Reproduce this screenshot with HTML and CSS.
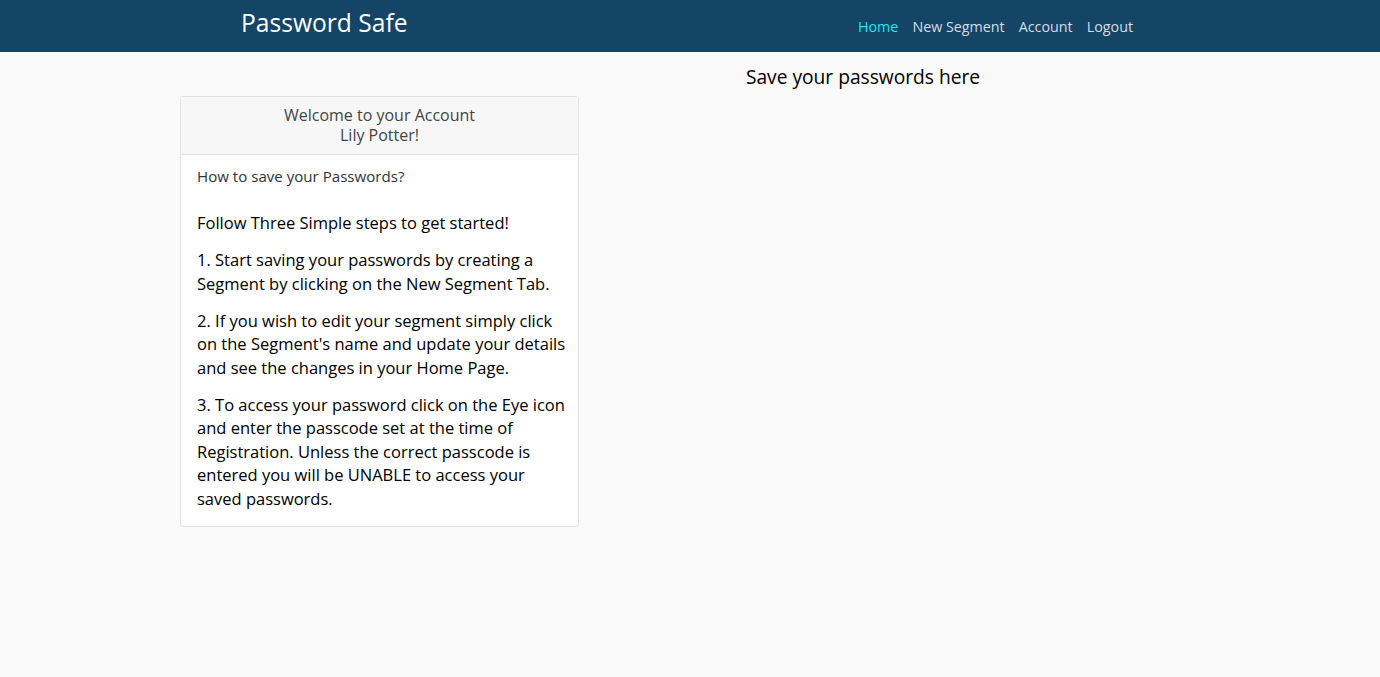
FILE: index.html
```html
<!DOCTYPE html>
<html lang="en">
<head>
<meta charset="utf-8">
<title>Password Safe</title>
<link rel="stylesheet" href="styles.css">
</head>
<body>
<header class="navbar">
  <div class="nav-inner">
    <a class="brand" href="#">Password Safe</a>
    <nav class="links">
      <a class="link active" href="#">Home</a>
      <a class="link" href="#">New Segment</a>
      <a class="link" href="#">Account</a>
      <a class="link" href="#">Logout</a>
    </nav>
  </div>
</header>
<main class="main">
  <section class="card">
    <div class="card-header">Welcome to your Account<br>Lily Potter!</div>
    <div class="card-body">
      <p class="howto">How to save your Passwords?</p>
      <p class="step">Follow Three Simple steps to get started!</p>
      <p class="step">1. Start saving your passwords by creating a<br>Segment by clicking on the New Segment Tab.</p>
      <p class="step">2. If you wish to edit your segment simply click<br>on the Segment's name and update your details<br>and see the changes in your Home Page.</p>
      <p class="step">3. To access your password click on the Eye icon<br>and enter the passcode set at the time of<br>Registration. Unless the correct passcode is<br>entered you will be UNABLE to access your<br>saved passwords.</p>
    </div>
  </section>
  <section class="saved">
    <h2 class="saved-title">Save your passwords here</h2>
  </section>
</main>
</body>
</html>
```
FILE: styles.css
```css
* { box-sizing: border-box; }
html, body { margin: 0; padding: 0; }
body {
  background: #f9f9f9;
  font-family: "Open Sans", "Noto Sans", sans-serif;
  color: #000;
}
.navbar {
  background: #144466;
  height: 52px;
}
.nav-inner {
  width: 898px;
  margin: 0 auto;
  height: 52px;
  display: flex;
  align-items: center;
  justify-content: space-between;
}
.brand {
  color: #fff;
  text-decoration: none;
  font-size: 24.6px;
  line-height: 30px;
  margin-top: -6px;
}
.links { display: flex; align-items: center; margin-top: 2px; margin-right: -1px; }
.link {
  color: #d6dde4;
  text-decoration: none;
  font-size: 14.3px;
  line-height: 22px;
  padding: 0 7px;
}
.link.active { color: #1ee6f3; }
.main {
  display: flex;
  align-items: flex-start;
  padding-left: 180px;
}
.card {
  width: 399px;
  margin-top: 44px;
  background: #fff;
  border: 1px solid #e2e2e2;
  border-radius: 3px;
}
.card-header {
  background: #f7f7f7;
  border-bottom: 1px solid #e2e2e2;
  text-align: center;
  color: #444;
  font-size: 16px;
  line-height: 20px;
  padding: 8px 16px 9px;
}
.card-body { padding: 11px 16px 16px; }
.howto {
  margin: 0 0 25px;
  font-size: 15.1px;
  line-height: 20px;
  color: #333;
}
.step {
  margin: 0 0 13.5px;
  font-size: 16.5px;
  line-height: 23.5px;
  white-space: nowrap;
}
.step:last-child { margin-bottom: 0; }
.saved {
  width: 568px;
  text-align: center;
}
.saved-title {
  margin: 13px 0 0;
  font-size: 19.2px;
  line-height: 24px;
  font-weight: 400;
}
```
